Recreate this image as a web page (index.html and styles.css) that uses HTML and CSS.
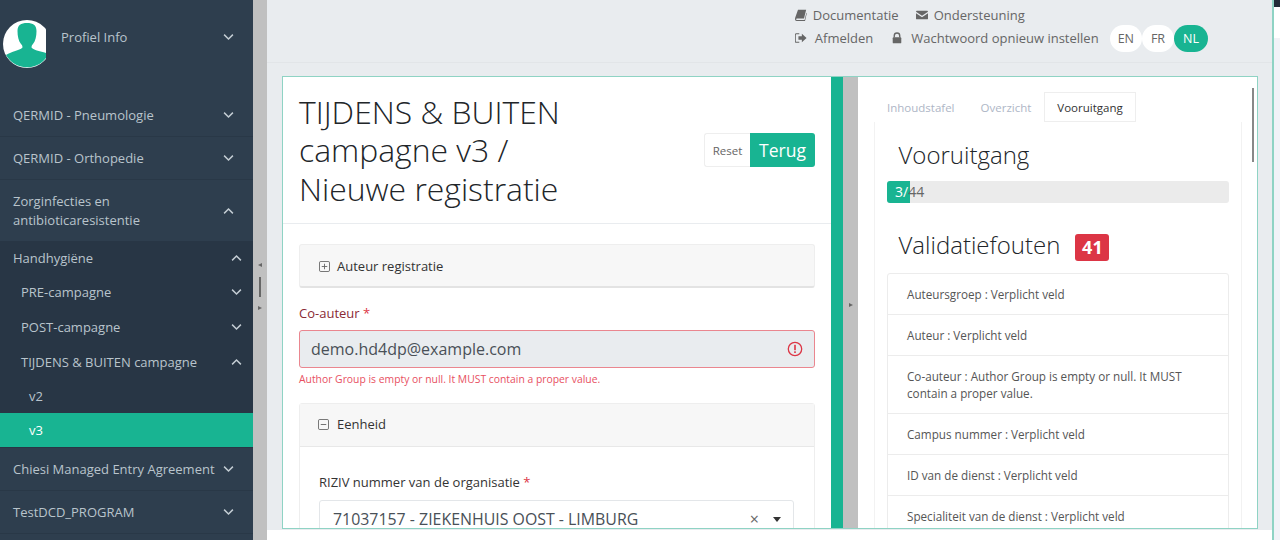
FILE: index.html
```html
<!DOCTYPE html>
<html lang="nl">
<head>
<meta charset="utf-8">
<title>Nieuwe registratie</title>
<link rel="stylesheet" href="styles.css">
</head>
<body>
<svg class="defs" width="0" height="0" aria-hidden="true">
  <symbol id="down" viewBox="0 0 12 8"><path d="M1.2 1.4 6 6.2l4.8-4.8" fill="none" stroke="currentColor" stroke-width="1.6"/></symbol>
  <symbol id="up" viewBox="0 0 12 8"><path d="M1.2 6.6 6 1.8l4.8 4.8" fill="none" stroke="currentColor" stroke-width="1.6"/></symbol>
</svg>
<div class="app">
  <aside class="sidebar">
    <div class="profile">
      <svg class="avatar" viewBox="0 0 43 48">
        <circle cx="24" cy="24" r="24" fill="#fff"/>
        <path d="M3 35C9 31 16 31 19.500 27.500C19.500 26 19 25 18 24C15.500 21 14.500 16 14.500 11C14.500 5 18 3 24 3C30 3 33.500 5 33.500 11C33.500 16 32.500 21 30 24C29 25 28.500 26 28.500 27.500C32 31 37 31 43 33V38A24 24 0 0 1 3 35Z" fill="#18b492"/>
      </svg>
      <span class="profile-name">Profiel Info</span>
      <svg class="chev"><use href="#down"/></svg>
    </div>
    <nav class="menu">
      <a class="item first"><span>QERMID - Pneumologie</span><svg class="chev"><use href="#down"/></svg></a>
      <a class="item"><span>QERMID - Orthopedie</span><svg class="chev"><use href="#down"/></svg></a>
      <a class="item tall"><span>Zorginfecties en antibioticaresistentie</span><svg class="chev"><use href="#up"/></svg></a>
      <div class="sub">
        <a class="sub-item lvl1"><span>Handhygiëne</span><svg class="chev"><use href="#up"/></svg></a>
        <a class="sub-item lvl2"><span>PRE-campagne</span><svg class="chev"><use href="#down"/></svg></a>
        <a class="sub-item lvl2 wide"><span>POST-campagne</span><svg class="chev"><use href="#down"/></svg></a>
        <a class="sub-item lvl2 wide"><span>TIJDENS &amp; BUITEN campagne</span><svg class="chev"><use href="#up"/></svg></a>
        <a class="sub-item lvl3"><span>v2</span></a>
        <a class="sub-item lvl3 active"><span>v3</span></a>
      </div>
      <a class="item"><span>Chiesi Managed Entry Agreement</span><svg class="chev"><use href="#down"/></svg></a>
      <a class="item"><span>TestDCD_PROGRAM</span><svg class="chev"><use href="#down"/></svg></a>
    </nav>
  </aside>
  <div class="splitter">
    <span class="tri-left"></span>
    <span class="grip"></span>
    <span class="tri-right"></span>
  </div>
  <main class="main">
    <header class="topbar">
      <div class="links">
        <div class="link-row one">
          <a class="tlink"><svg class="ti" viewBox="0 0 14 14"><path d="M3.500 1H13L10.500 11H2.200C1 11 1 12.800 2.200 12.800H11.200L13.300 4.500 13.800 5 11.700 14H2C0 14-.3 12 .3 10Z" fill="#666"/></svg>Documentatie</a>
          <a class="tlink"><svg class="ti" viewBox="0 0 14 14"><path d="M1.300 2H12.700C13.400 2 14 2.600 14 3.300L7 8 0 3.300C0 2.600.6 2 1.300 2ZM0 5 7 9.600 14 5V11C14 11.700 13.400 12 12.700 12H1.300C.6 12 0 11.700 0 11Z" fill="#666"/></svg>Ondersteuning</a>
        </div>
        <div class="link-row two">
          <a class="tlink out"><svg class="ti" viewBox="0 0 14 14"><path d="M5 2H1.500C.7 2 .3 2.600.3 3.300V10.700C.3 11.400.7 12 1.500 12H5" fill="none" stroke="#666" stroke-width="1.300"/><path d="M4 5H8V2L13.500 7 8 12V9H4Z" fill="#666"/></svg>Afmelden</a>
          <a class="tlink out"><svg class="ti" viewBox="0 0 14 14"><path d="M3.800 6.500V4.300C3.800 2.500 5.200 1.200 7 1.200S10.200 2.500 10.200 4.300V6.500" fill="none" stroke="#666" stroke-width="1.600"/><rect x="2" y="6.200" width="10" height="7" rx="1" fill="#666"/></svg>Wachtwoord opnieuw instellen</a>
          <div class="langs"><span class="lang">EN</span><span class="lang">FR</span><span class="lang on">NL</span></div>
        </div>
      </div>
    </header>
    <section class="panel">
      <div class="left">
        <div class="head">
          <h1>TIJDENS &amp; BUITEN campagne v3 / Nieuwe registratie</h1>
          <div class="actions"><button class="btn-reset">Reset</button><button class="btn-back">Terug</button></div>
        </div>
        <div class="form">
          <div class="acc closed">
            <svg class="box" viewBox="0 0 12 12"><rect x=".5" y=".5" width="11" height="11" rx="1.500" fill="none" stroke="#666"/><path d="M3 6H9M6 3V9" stroke="#666"/></svg>
            <span>Auteur registratie</span>
          </div>
          <label class="err-label">Co-auteur <b>*</b></label>
          <div class="input-err">
            <span>demo.hd4dp@example.com</span>
            <svg class="alert" viewBox="0 0 16 16"><circle cx="8" cy="8" r="6.700" fill="none" stroke="#dc3545" stroke-width="1.300"/><rect x="7.200" y="3.800" width="1.600" height="5.400" fill="#dc3545"/><rect x="7.200" y="10.300" width="1.600" height="1.700" fill="#dc3545"/></svg>
          </div>
          <div class="err-msg">Author Group is empty or null. It MUST contain a proper value.</div>
          <div class="acc-open">
            <div class="acc-head">
              <svg class="box" viewBox="0 0 12 12"><rect x=".5" y=".5" width="11" height="11" rx="1.500" fill="none" stroke="#666"/><path d="M3 6H9" stroke="#666"/></svg>
              <span>Eenheid</span>
            </div>
            <div class="acc-body">
              <label class="f-label">RIZIV nummer van de organisatie <b>*</b></label>
              <div class="select">
                <span>71037157 - ZIEKENHUIS OOST - LIMBURG</span>
                <span class="clear">×</span>
                <span class="caret"></span>
              </div>
            </div>
          </div>
        </div>
      </div>
      <div class="bar-teal"></div>
      <div class="bar-gray"><span class="tri-right"></span></div>
      <div class="right">
        <div class="tabs">
          <a class="tab">Inhoudstafel</a>
          <a class="tab">Overzicht</a>
          <a class="tab on">Vooruitgang</a>
        </div>
        <div class="tabbody">
          <h2>Vooruitgang</h2>
          <div class="progress"><div class="fill"></div><span class="ptext"><span class="pdone">3/</span>44</span></div>
          <h2 class="h-val">Validatiefouten <span class="badge">41</span></h2>
          <ul class="errors">
            <li>Auteursgroep : Verplicht veld</li>
            <li>Auteur : Verplicht veld</li>
            <li>Co-auteur : Author Group is empty or null. It MUST contain a proper value.</li>
            <li>Campus nummer : Verplicht veld</li>
            <li>ID van de dienst : Verplicht veld</li>
            <li>Specialiteit van de dienst : Verplicht veld</li>
          </ul>
        </div>
        <div class="scroll"></div>
      </div>
    </section>
  </main>
  <div class="rail">
    <div class="rail-dark"></div>
    <div class="rail-white"></div>
    <div class="rail-rest"></div>
  </div>
</div>
</body>
</html>
```
FILE: styles.css
```css
* { box-sizing: border-box; }
html, body { margin: 0; height: 100%; }
body { font-family: "Open Sans", "Liberation Sans", sans-serif; color: #495057; background: #fff; overflow: hidden; }
.defs { position: absolute; }
.app { display: flex; height: 540px; width: 1280px; overflow: hidden; }

.sidebar { width: 253px; flex: none; background: #2e3e4e; color: #b8c7ce; font-size: 13px; }
.chev { width: 11px; height: 8px; flex: none; color: #c3ccd3; }
.profile { height: 94px; display: flex; align-items: flex-start; padding: 20px 19px 0 2.500px; }
.avatar { width: 43px; height: 48px; flex: none; }
.profile-name { flex: 1; margin: 8px 0 0 15.500px; color: #b9c4cc; }
.profile .chev { margin-top: 13px; }
.menu { display: block; }
.item { display: flex; align-items: center; justify-content: space-between; padding: 0 19px 0 13px; height: 43px; border-bottom: 1px solid #293847; color: #b9c4cc; }
.item.tall { height: 61px; border-bottom: 0; line-height: 19px; }
.item.tall span { width: 170px; }
.sub { background: #283645; padding-bottom: 1px; }
.sub-item { display: flex; align-items: center; justify-content: space-between; height: 34px; padding-right: 11px; color: #b9c4cc; }
.sub-item.wide { height: 35px; }
.lvl1 { padding-left: 13px; }
.lvl2 { padding-left: 21px; }
.lvl3 { padding-left: 29px; }
.active { background: #18b492; color: #fff; }

.splitter { width: 14px; flex: none; background: #c0c0c0; display: flex; flex-direction: column; align-items: center; padding-top: 263px; }
.tri-left { width: 0; height: 0; border: 2.500px solid transparent; border-right: 4px solid #666; border-left: 0; }
.tri-right { width: 0; height: 0; border: 2.500px solid transparent; border-left: 4px solid #666; border-right: 0; }
.grip { width: 2px; height: 20px; margin: 10px 0 9px; background: #666; }

.main { width: 1005px; flex: none; height: 530px; background: #e9ecef; }
.topbar { height: 63px; border-bottom: 1px solid #e2e5e8; display: flex; justify-content: flex-end; padding-right: 64px; }
.links { font-size: 13px; color: #666; }
.link-row { display: flex; align-items: center; }
.link-row.one { height: 15px; margin-top: 7px; gap: 17px; }
.link-row.two { margin-top: 2px; height: 28px; gap: 18px; }
.tlink { display: flex; align-items: center; gap: 6px; white-space: nowrap; }
.tlink.out { gap: 8px; }
.ti { width: 12px; height: 12px; flex: none; }
.langs { display: flex; margin-left: -7px; }
.lang { height: 27px; min-width: 32px; padding: 0 8px; background: #fff; border-radius: 13.500px; font-size: 12.500px; line-height: 27px; text-align: center; color: #666; }
.lang.on { background: #18b492; color: #fff; width: 34px; }

.panel { margin: 13px 0 0 15px; width: 976px; height: 453px; border: 1px solid #8fd3c4; background: #fff; display: flex; overflow: hidden; }
.left { width: 548px; flex: none; overflow: hidden; }
.bar-teal { width: 12px; flex: none; background: #18b492; }
.bar-gray { width: 15px; flex: none; background: #c0c0c0; display: flex; justify-content: center; align-items: flex-start; padding-top: 226px; }
.right { flex: 1; min-width: 0; position: relative; overflow: hidden; padding: 15px 0 0 16px; }

.head { height: 147px; border-bottom: 1px solid #e9ecef; display: flex; align-items: center; justify-content: space-between; padding: 0 16px; }
h1 { margin: 1px 0 0; width: 300px; font-size: 31.900px; font-weight: 300; line-height: 38.500px; color: #212529; }
.actions { display: flex; }
.actions button { font-family: inherit; border: 0; margin: 0; }
.btn-reset { height: 34px; width: 46px; background: #fff; border: 1px solid #eee !important; border-right: 0 !important; border-radius: 3px 0 0 3px; font-size: 11.500px; color: #666; padding: 0; }
.btn-back { height: 34px; width: 65px; background: #18b492; color: #fff; font-size: 17.500px; border-radius: 0 3px 3px 0; padding: 0; }

.form { padding: 20px 16px 0; font-size: 13px; }
.acc { height: 44px; display: flex; align-items: center; padding: 1px 0 0 19px; background: #f7f7f7; border: 1px solid #eee; border-bottom: 2px solid #e3e3e3; border-radius: 3px; color: #333; gap: 7px; }
.box { width: 11px; height: 11px; flex: none; }
.err-label { display: block; margin-top: 16px; height: 21px; line-height: 18px; color: #8a2a35; }
.err-label b, .f-label b { color: #dc3545; font-weight: 400; }
.input-err { height: 38px; margin-top: 5px; background: #e9ecef; border: 1px solid #ea868f; border-radius: 3px; display: flex; align-items: center; justify-content: space-between; padding: 0 11px; font-size: 16px; color: #495057; }
.alert { width: 16px; height: 16px; flex: none; }
.err-msg { margin-top: 2px; height: 18px; font-size: 10.360px; line-height: 18px; color: #e8505f; }
.acc-open { margin-top: 15px; border: 1px solid #eee; border-radius: 3px; height: 200px; }
.acc-head { height: 43px; display: flex; align-items: center; padding: 0 0 2px 18px; gap: 8px; background: #f7f7f7; border-bottom: 1px solid #e8e8e8; color: #333; }
.acc-body { padding: 26px 20px 0 19px; }
.f-label { display: block; height: 22px; line-height: 18px; color: #333; }
.select { height: 38px; margin-top: 5px; border: 1px solid #e3e6e9; border-radius: 3px; display: flex; align-items: center; padding: 0 12px 0 13px; font-size: 15.900px; line-height: 18px; color: #495057; white-space: nowrap; }
.select > span:first-child { flex: 1; }
.clear { color: #666; font-size: 16px; margin-right: 14px; }
.caret { width: 0; height: 0; border: 4.500px solid transparent; border-top: 5px solid #333; border-bottom: 0; }

.tabs { display: flex; height: 30px; font-size: 11.500px; color: #aeb6c6; }
.tab { padding: 0 12px; line-height: 30px; border: 1px solid transparent; }
.tab.on { color: #333; background: #fff; border-color: #eee; }
.tabbody { width: 368px; height: 420px; border: 1px solid #f2f2f2; border-top: 0; border-bottom: 0; padding: 0 12px; }
h2 { margin: 0; padding: 17px 0 0 11.500px; font-size: 24px; font-weight: 300; color: #212529; line-height: 32px; height: 59px; }
.progress { position: relative; height: 22px; background: #ebebeb; border-radius: 3px; overflow: hidden; }
.fill { width: 23px; height: 22px; background: #18b492; }
.ptext { position: absolute; left: 8px; top: 0; font-size: 14px; line-height: 22px; color: #666; }
.pdone { color: #fff; }
.h-val { height: 70px; padding-top: 26px; display: flex; align-items: flex-start; }
.badge { display: inline-block; margin: 5px 0 0 15px; width: 34px; height: 27px; background: #dc3545; color: #fff; font-size: 18px; font-weight: 700; border-radius: 3px; text-align: center; line-height: 27px; }
.errors { margin: 0; padding: 0; list-style: none; border: 1px solid #ececec; border-radius: 3px; font-size: 11.700px; line-height: 17px; color: #555; }
.errors li { padding: 11.500px 19px; border-bottom: 1px solid #ececec; }
.scroll { position: absolute; right: 3px; top: 11px; width: 2px; height: 74px; background: #888; }

.rail { width: 8px; flex: none; height: 540px; border-left: 2px solid #8fd3c4; display: flex; flex-direction: column; }
.rail-dark { height: 7px; background: #222c38; }
.rail-white { height: 31px; background: #fff; }
.rail-rest { flex: 1; background: #f1f2f7; }
```
